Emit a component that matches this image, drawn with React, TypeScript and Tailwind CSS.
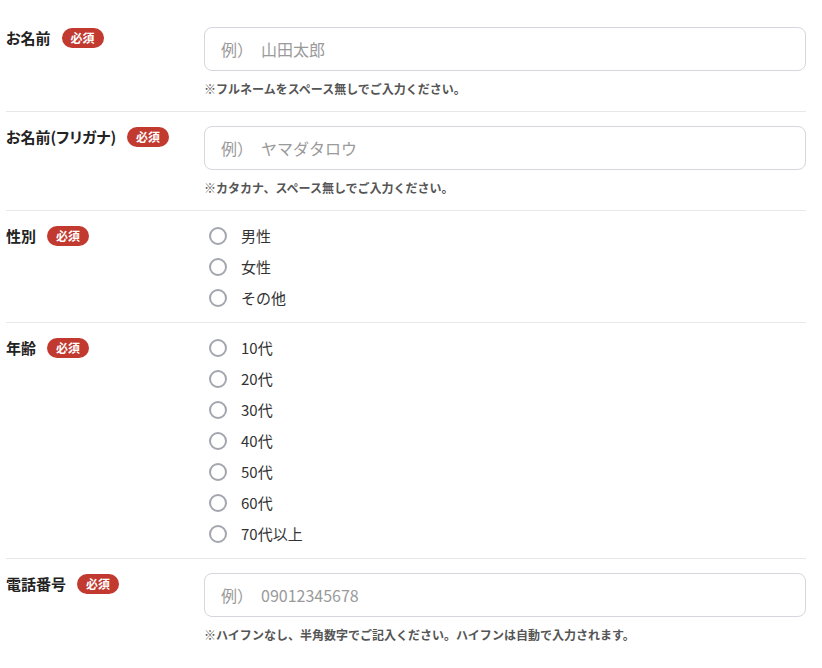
import React from 'react';

const font = { fontFamily: '"Noto Sans CJK JP", "Noto Sans", sans-serif' };

const Badge = () => (
  <span className="inline-flex h-[20px] items-center rounded-full bg-[#c1392f] px-[9px] text-[12px] font-bold leading-none text-white">
    必須
  </span>
);

const Label = ({ text }: { text: string }) => (
  <div className="flex w-[198px] shrink-0 items-center gap-[11px] self-start pt-[1px]">
    <span className="text-[15px] font-bold leading-[20px] text-[#222] [font-feature-settings:'palt']">{text}</span>
    <Badge />
  </div>
);

const Note = ({ children }: { children: React.ReactNode }) => (
  <p className="mt-[9px] text-[12px] font-semibold leading-[18px] text-[#555]">{children}</p>
);

const inputCls =
  'h-[44px] w-full rounded-lg border border-[#d6d6dc] bg-white px-4 text-[16px] text-[#333] outline-none placeholder:text-[#9a9a9a]';

const TextRow = ({ label, placeholder, note }: { label: string; placeholder: string; note: string }) => (
  <div className="flex items-start border-b border-[#e8e8ea] pt-[14px] pb-[13px]">
    <Label text={label} />
    <div className="flex-1">
      <input type="text" placeholder={placeholder} className={inputCls} />
      <Note>{note}</Note>
    </div>
  </div>
);

const RadioRow = ({ label, name, options }: { label: string; name: string; options: string[] }) => (
  <div className="flex items-start border-b border-[#e8e8ea] pt-[14px] pb-[14px]">
    <Label text={label} />
    <div className="-my-[5px] flex-1">
      {options.map((opt) => (
        <label key={opt} className="flex h-[31px] items-center gap-[14px] pl-[5px]">
          <span className="h-[18px] w-[18px] rounded-full border-2 border-[#a3a6ae] bg-white" />
          <input type="radio" name={name} className="hidden" />
          <span className="text-[15px] leading-none text-[#333]">{opt}</span>
        </label>
      ))}
    </div>
  </div>
);

export default function App() {
  return (
    <div className="min-h-screen bg-white pl-[6px] pr-[16px] pt-[13px]" style={font}>
      <TextRow label="お名前" placeholder="例）　山田太郎" note="※フルネームをスペース無しでご入力ください。" />
      <TextRow label="お名前(フリガナ)" placeholder="例）　ヤマダタロウ" note="※カタカナ、スペース無しでご入力ください。" />
      <RadioRow label="性別" name="gender" options={['男性', '女性', 'その他']} />
      <RadioRow
        label="年齢"
        name="age"
        options={['10代', '20代', '30代', '40代', '50代', '60代', '70代以上']}
      />
      <div className="flex items-start pt-[14px]">
        <Label text="電話番号" />
        <div className="flex-1">
          <input type="tel" placeholder="例）　09012345678" className={inputCls} />
          <Note>※ハイフンなし、半角数字でご記入ください。ハイフンは自動で入力されます。</Note>
        </div>
      </div>
    </div>
  );
}
